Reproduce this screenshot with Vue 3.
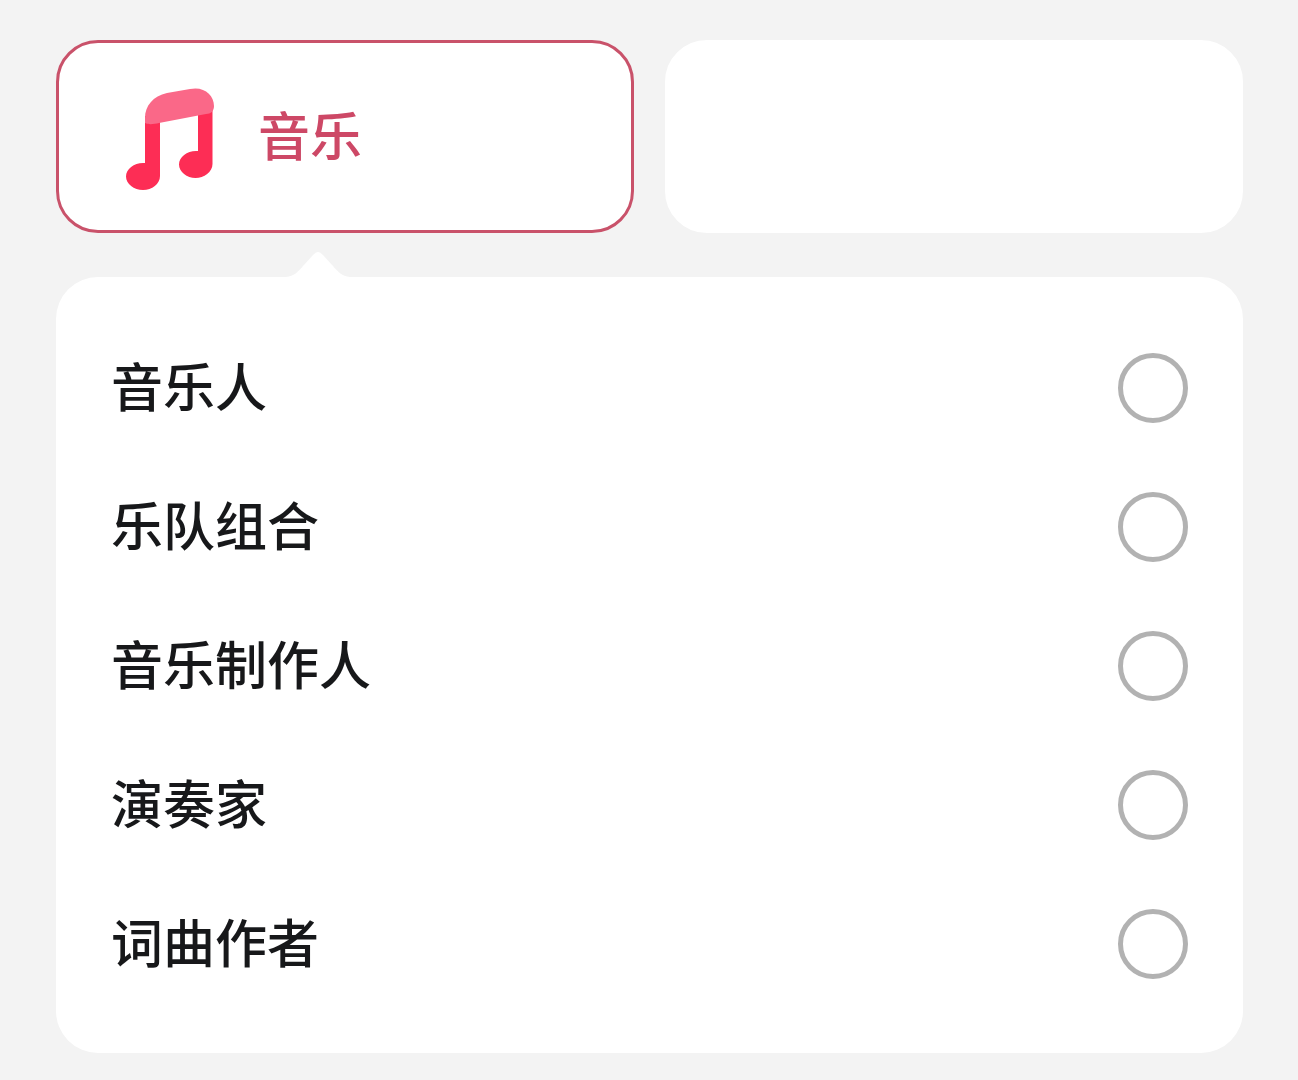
<script setup>
import { ref } from 'vue'

const roles = ['音乐人', '乐队组合', '音乐制作人', '演奏家', '词曲作者']
const selected = ref('')
</script>

<template>
  <main class="page">
    <div class="categories">
      <button type="button" class="card active" aria-expanded="true">
        <svg class="note" viewBox="0 0 88 102" aria-hidden="true">
          <path
            fill="#fd2d55"
            d="M19 28H34V88C34 96 26 102 17 102S0 96 0 88.500S8 75 17 75H19Z M72 18H86.500V76C86.500 84 78 90 69.500 90S53 84 53 76.500S61 63 70 63H72Z"
          />
          <path
            fill="#fa6888"
            d="M19 35V30C19 18 27 8 41 5L64 1C78-2 88 7 88 18C88 23 85 26 80 26L33 35C28 36 23 37 19 35Z"
          />
        </svg>
        <span class="label">音乐</span>
      </button>
      <div class="card"></div>
    </div>

    <section class="panel">
      <svg class="pointer" viewBox="0 0 64 26" aria-hidden="true">
        <path fill="#fff" d="M0 26C8 25 12 21 17 15L27 4Q32-2 37 4L47 15C52 21 56 25 64 26Z" />
      </svg>
      <label v-for="role in roles" :key="role" class="row">
        <span class="label">{{ role }}</span>
        <input v-model="selected" type="radio" name="role" :value="role" />
      </label>
    </section>
  </main>
</template>

<style>
body {
  margin: 0;
  background: #f3f3f3;
}
</style>

<style scoped>
.page {
  display: flex;
  flex-direction: column;
  gap: 44px;
  padding: 40px 55px 28px 56px;
  font-family: "Noto Sans CJK SC", sans-serif;
  font-size: 52px;
  font-weight: 500;
  line-height: 64px;
  color: #17181a;
}

.categories {
  display: grid;
  grid-template-columns: 1fr 1fr;
  gap: 31px;
}

.card {
  display: flex;
  align-items: center;
  box-sizing: border-box;
  min-height: 193px;
  padding: 0 67px;
  border: 3px solid #fff;
  border-radius: 42px;
  background: #fff;
  font: inherit;
}

.card.active {
  gap: 44px;
  border-color: #c9526a;
  color: #cd4866;
  cursor: pointer;
}

.note {
  flex: none;
  width: 88px;
  height: 102px;
  margin-top: 4px;
}

.label {
  padding-bottom: 6px;
}

.panel {
  position: relative;
  display: flex;
  flex-direction: column;
  gap: 69px;
  padding: 76px 55px 74px;
  border-radius: 42px;
  background: #fff;
}

.pointer {
  position: absolute;
  bottom: 100%;
  left: 230px;
  width: 64px;
  height: 26px;
}

.row {
  display: flex;
  align-items: center;
  justify-content: space-between;
  cursor: pointer;
}

.row input {
  appearance: none;
  flex: none;
  box-sizing: border-box;
  width: 70px;
  height: 70px;
  margin: 0;
  border: 5px solid #b2b2b2;
  border-radius: 50%;
  background: #fff;
  cursor: pointer;
}

.row input:checked {
  border: 20px solid #fd2d55;
}
</style>
